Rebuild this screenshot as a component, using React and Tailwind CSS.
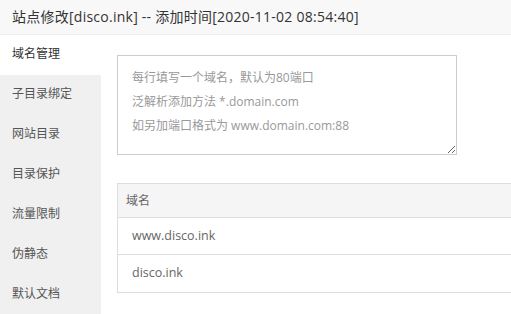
import React from "react";

const menu = ["域名管理", "子目录绑定", "网站目录", "目录保护", "流量限制", "伪静态", "默认文档"];
const domains = ["www.disco.ink", "disco.ink"];

export default function App() {
  return (
    <div
      className="w-[511px] h-[314px] overflow-hidden bg-white text-[#333]"
      style={{ fontFamily: '"Open Sans", "Noto Sans CJK SC", sans-serif' }}
    >
      {/* Title bar */}
      <div className="h-[35px] bg-[#f8f8f8] border-b border-[#eee] pl-3 pb-[2px] flex items-center text-[14px] tracking-[0.25px] text-[#333]">
        站点修改[disco.ink] -- 添加时间[2020-11-02 08:54:40]
      </div>

      <div className="flex">
        {/* Left menu */}
        <div className="w-[101px] shrink-0 bg-[#f0f0f0] h-[279px]">
          {menu.map((m, i) => (
            <div
              key={m}
              className={`h-10 pl-3 pb-[2px] flex items-center text-[12px] ${
                i === 0 ? "bg-white text-[#333]" : "text-[#555]"
              }`}
            >
              {m}
            </div>
          ))}
        </div>

        {/* Content */}
        <div className="flex-1 pl-4 pt-5 min-w-0">
          <textarea
            className="block w-[340px] h-[100px] border border-[#ccc] px-[14px] py-[10px] text-[12px] leading-6 text-[#666] placeholder:text-[#999] outline-none"
            placeholder={"每行填写一个域名，默认为80端口\n泛解析添加方法 *.domain.com\n如另加端口格式为 www.domain.com:88"}
          />

          <div className="mt-[28px] w-[420px] border border-[#ddd] text-[#666]">
            <div className="h-[34px] bg-[#f5f5f5] border-b border-[#ddd] pl-2 flex items-center text-[12px]">
              域名
            </div>
            {domains.map((d, i) => (
              <div
                key={d}
                className={`h-[37px] pl-[14px] flex items-center text-[12.5px] ${
                  i === 0 ? "border-b border-[#ddd]" : ""
                }`}
              >
                {d}
              </div>
            ))}
          </div>
        </div>
      </div>
    </div>
  );
}
